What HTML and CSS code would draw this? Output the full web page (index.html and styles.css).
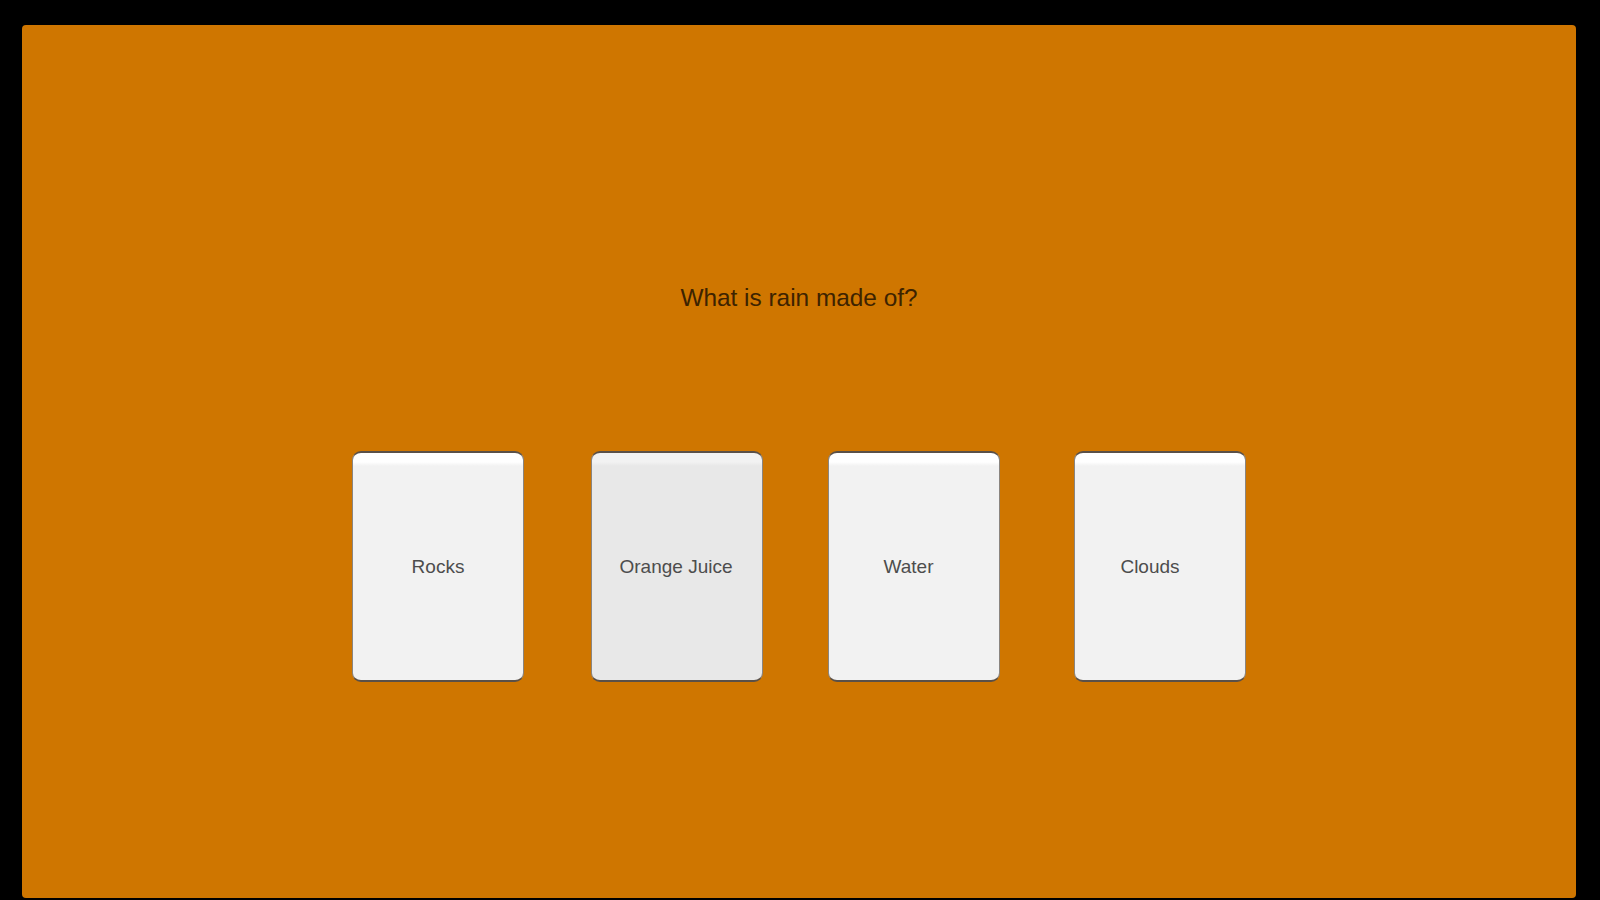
FILE: index.html
```html
<!DOCTYPE html>
<html>
<head>
<meta charset="utf-8">
<link rel="stylesheet" href="styles.css">
</head>
<body>
<div class="panel">
  <div class="question">What is rain made of?</div>
  <div class="answers">
    <div class="card">Rocks</div>
    <div class="card card-hover gap-a">Orange Juice</div>
    <div class="card gap-b shift-a">Water</div>
    <div class="card gap-c shift-b">Clouds</div>
  </div>
</div>
</body>
</html>
```
FILE: styles.css
```css
html, body {
  margin: 0;
  padding: 0;
  background: #000;
}
body {
  font-family: "Liberation Sans", Arial, sans-serif;
  overflow: hidden;
}
.panel {
  margin: 25px 24px 0 22px;
  height: 873px;
  background: #cf7600;
  border-radius: 4px;
  display: flex;
  flex-direction: column;
  align-items: stretch;
}
.question {
  margin-top: 259px;
  text-align: center;
  font-size: 24.4px;
  line-height: 28px;
  color: #3d2300;
}
.answers {
  margin-top: 139px;
  display: flex;
  padding-left: 330px;
}
.card {
  width: 172px;
  height: 231px;
  box-sizing: border-box;
  border-radius: 9px;
  border-top: 2px solid #5a5048;
  border-bottom: 2px solid #5a5048;
  border-left: 1px solid #8a8580;
  border-right: 1px solid #8a8580;
  background: linear-gradient(#ffffff 0, #ffffff 9px, #f2f2f2 13px, #f2f2f2 100%);
  display: flex;
  align-items: center;
  justify-content: center;
  font-size: 19px;
  color: #4d4d4d;
}
.card-hover {
  background: linear-gradient(#f2f2f2 0, #f2f2f2 9px, #e8e8e8 13px, #e8e8e8 100%);
  padding-right: 2px;
}
.gap-a { margin-left: 67px; }
.gap-b { margin-left: 65px; }
.gap-c { margin-left: 74px; }
.shift-a { padding-right: 11px; }
.shift-b { padding-right: 20px; }
```
